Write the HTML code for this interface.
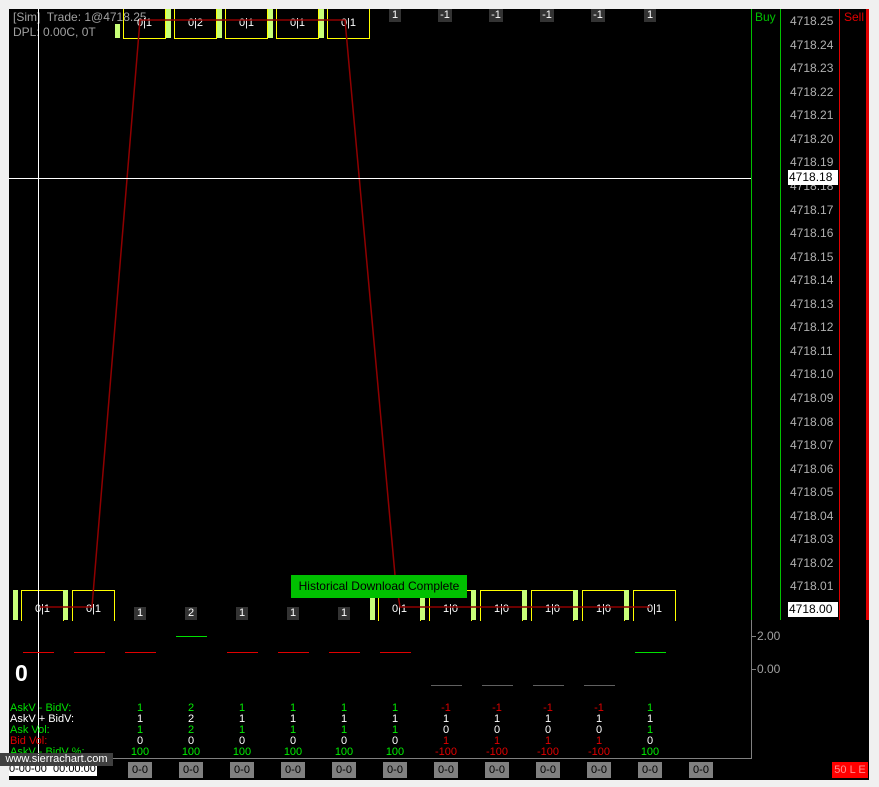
<!DOCTYPE html><html><head><style>
body{margin:0;width:879px;height:787px;background:#f0f0f0;position:relative;overflow:hidden;font-family:"Liberation Sans",sans-serif}
div{position:absolute}
.bk{left:9px;top:9px;width:860px;height:771px;background:#000}
.bx{border:1px solid #ffff00;border-top:none;width:41px;height:29px;color:#fff;font-size:11px;text-align:center;line-height:28px}
.bb{border:1px solid #ffff00;border-bottom:none;width:41px;height:30px;color:#fff;font-size:11px;text-align:center;line-height:36px}
.g{background:#c8ff78;width:5px}
.p{left:790px;font-size:12px;color:#b0b0b0;width:41px;white-space:nowrap}
.h{background:#fff;color:#000;left:788px;width:50px;height:15px;padding-left:1px;box-sizing:border-box}
.t{font-size:11px;color:#fff;background:#333;width:12px;text-align:center;height:13px;line-height:13px}
.d{height:1px;width:31px}
.r{font-size:11px;line-height:11px;width:30px;text-align:center}
.z{top:762px;width:24px;height:16px;background:#808080;color:#000;font-size:11px;line-height:16px;text-align:center}
</style></head><body>
<div class="bk"></div>
<div style="left:751px;top:9px;width:1px;height:611px;background:#00c000"></div>
<div style="left:780px;top:9px;width:1px;height:611px;background:#00c000"></div>
<div style="left:839px;top:9px;width:1px;height:611px;background:#e00000"></div>
<div style="left:866px;top:9px;width:3px;height:611px;background:#e00000"></div>
<div style="left:755px;top:10px;color:#00c000;font-size:12px">Buy</div>
<div style="left:844px;top:10px;color:#e00000;font-size:12px">Sell</div>
<div class="p" style="top:14px">4718.25</div><div class="p" style="top:38px">4718.24</div><div class="p" style="top:61px">4718.23</div><div class="p" style="top:85px">4718.22</div><div class="p" style="top:108px">4718.21</div><div class="p" style="top:132px">4718.20</div><div class="p" style="top:155px">4718.19</div><div class="p" style="top:179px">4718.18</div><div class="p" style="top:203px">4718.17</div><div class="p" style="top:226px">4718.16</div><div class="p" style="top:250px">4718.15</div><div class="p" style="top:273px">4718.14</div><div class="p" style="top:297px">4718.13</div><div class="p" style="top:320px">4718.12</div><div class="p" style="top:344px">4718.11</div><div class="p" style="top:367px">4718.10</div><div class="p" style="top:391px">4718.09</div><div class="p" style="top:415px">4718.08</div><div class="p" style="top:438px">4718.07</div><div class="p" style="top:462px">4718.06</div><div class="p" style="top:485px">4718.05</div><div class="p" style="top:509px">4718.04</div><div class="p" style="top:532px">4718.03</div><div class="p" style="top:556px">4718.02</div><div class="p" style="top:579px">4718.01</div>
<div class="p h" style="top:170px">4718.18</div>
<div class="p h" style="top:602px">4718.00</div>
<div style="left:13px;top:10px;color:#a0a0a0;font-size:12px;line-height:15px">[Sim]&nbsp; Trade: 1@4718.25<br>DPL: 0.00C, 0T</div>
<div class="g" style="left:115px;top:24px;height:14px"></div>
<div class="bx" style="left:123px;top:9px">0|1</div><div class="g" style="left:166px;top:9px;height:29px"></div>
<div class="bx" style="left:174px;top:9px">0|2</div><div class="g" style="left:217px;top:9px;height:29px"></div>
<div class="bx" style="left:225px;top:9px">0|1</div><div class="g" style="left:268px;top:9px;height:29px"></div>
<div class="bx" style="left:276px;top:9px">0|1</div><div class="g" style="left:319px;top:9px;height:29px"></div>
<div class="bx" style="left:327px;top:9px">0|1</div>
<div class="t" style="left:389px;top:9px">1</div><div class="t" style="left:438px;top:9px;width:14px">-1</div><div class="t" style="left:489px;top:9px;width:14px">-1</div><div class="t" style="left:540px;top:9px;width:14px">-1</div><div class="t" style="left:591px;top:9px;width:14px">-1</div><div class="t" style="left:644px;top:9px">1</div>
<div class="g" style="left:13px;top:590px;height:30px"></div><div class="bb" style="left:21px;top:590px">0|1</div>
<div class="g" style="left:63px;top:590px;height:30px"></div><div class="bb" style="left:72px;top:590px">0|1</div>
<div class="g" style="left:370px;top:590px;height:30px"></div><div class="bb" style="left:378px;top:590px">0|1</div>
<div class="g" style="left:420px;top:590px;height:30px"></div><div class="bb" style="left:429px;top:590px">1|0</div>
<div class="g" style="left:471px;top:590px;height:30px"></div><div class="bb" style="left:480px;top:590px">1|0</div>
<div class="g" style="left:522px;top:590px;height:30px"></div><div class="bb" style="left:531px;top:590px">1|0</div>
<div class="g" style="left:573px;top:590px;height:30px"></div><div class="bb" style="left:582px;top:590px">1|0</div>
<div class="g" style="left:624px;top:590px;height:30px"></div><div class="bb" style="left:633px;top:590px">0|1</div>
<div class="t" style="left:134px;top:607px">1</div><div class="t" style="left:185px;top:607px">2</div><div class="t" style="left:236px;top:607px">1</div><div class="t" style="left:287px;top:607px">1</div><div class="t" style="left:338px;top:607px">1</div>
<svg style="position:absolute;left:0;top:0" width="879" height="787"><polyline points="40,607 92,607 140,20 345,20 395,575 400,607 650,607" fill="none" stroke="#900000" stroke-width="1.5"/>
<line x1="38.5" y1="9" x2="38.5" y2="760" stroke="#fff"/><line x1="9" y1="178.5" x2="751" y2="178.5" stroke="#fff"/>
<line x1="751.5" y1="620" x2="751.5" y2="758" stroke="#808080"/><line x1="9" y1="758.5" x2="752" y2="758.5" stroke="#808080"/>
<line x1="751" y1="636.5" x2="756" y2="636.5" stroke="#808080"/><line x1="751" y1="669.5" x2="756" y2="669.5" stroke="#808080"/></svg>
<div style="left:291px;top:575px;width:176px;height:23px;background:#00c000;color:#000;font-size:12px;line-height:23px;text-align:center">Historical Download Complete</div>
<div style="left:757px;top:629px;color:#a0a0a0;font-size:12px">2.00</div><div style="left:757px;top:662px;color:#a0a0a0;font-size:12px">0.00</div>
<div class="d" style="left:23px;top:652px;background:#e00000"></div><div class="d" style="left:74px;top:652px;background:#e00000"></div><div class="d" style="left:125px;top:652px;background:#e00000"></div><div class="d" style="left:176px;top:636px;background:#00e000"></div><div class="d" style="left:227px;top:652px;background:#e00000"></div><div class="d" style="left:278px;top:652px;background:#e00000"></div><div class="d" style="left:329px;top:652px;background:#e00000"></div><div class="d" style="left:380px;top:652px;background:#e00000"></div>
<div class="d" style="left:431px;top:685px;background:#606060"></div><div class="d" style="left:482px;top:685px;background:#606060"></div><div class="d" style="left:533px;top:685px;background:#606060"></div><div class="d" style="left:584px;top:685px;background:#606060"></div><div class="d" style="left:635px;top:652px;background:#00e000"></div>
<div style="left:15px;top:660px;color:#fff;font-size:23px;font-weight:bold">0</div>
<div style="left:10px;top:703px;font-size:11px;line-height:11px"><span style="color:#00e000">AskV - BidV:</span><br><span style="color:#fff">AskV + BidV:</span><br><span style="color:#00e000">Ask Vol:</span><br><span style="color:#e00000">Bid Vol:</span><br><span style="color:#00e000">AskV - BidV %:</span></div>
<div class="r" style="left:125px;top:703px"><span style="color:#0e0">1</span><br><span style="color:#fff">1</span><br><span style="color:#0e0">1</span><br><span style="color:#fff">0</span><br><span style="color:#0e0">100</span></div>
<div class="r" style="left:176px;top:703px"><span style="color:#0e0">2</span><br><span style="color:#fff">2</span><br><span style="color:#0e0">2</span><br><span style="color:#fff">0</span><br><span style="color:#0e0">100</span></div>
<div class="r" style="left:227px;top:703px"><span style="color:#0e0">1</span><br><span style="color:#fff">1</span><br><span style="color:#0e0">1</span><br><span style="color:#fff">0</span><br><span style="color:#0e0">100</span></div>
<div class="r" style="left:278px;top:703px"><span style="color:#0e0">1</span><br><span style="color:#fff">1</span><br><span style="color:#0e0">1</span><br><span style="color:#fff">0</span><br><span style="color:#0e0">100</span></div>
<div class="r" style="left:329px;top:703px"><span style="color:#0e0">1</span><br><span style="color:#fff">1</span><br><span style="color:#0e0">1</span><br><span style="color:#fff">0</span><br><span style="color:#0e0">100</span></div>
<div class="r" style="left:380px;top:703px"><span style="color:#0e0">1</span><br><span style="color:#fff">1</span><br><span style="color:#0e0">1</span><br><span style="color:#fff">0</span><br><span style="color:#0e0">100</span></div>
<div class="r" style="left:431px;top:703px"><span style="color:#e00000">-1</span><br><span style="color:#fff">1</span><br><span style="color:#fff">0</span><br><span style="color:#e00000">1</span><br><span style="color:#e00000">-100</span></div>
<div class="r" style="left:482px;top:703px"><span style="color:#e00000">-1</span><br><span style="color:#fff">1</span><br><span style="color:#fff">0</span><br><span style="color:#e00000">1</span><br><span style="color:#e00000">-100</span></div>
<div class="r" style="left:533px;top:703px"><span style="color:#e00000">-1</span><br><span style="color:#fff">1</span><br><span style="color:#fff">0</span><br><span style="color:#e00000">1</span><br><span style="color:#e00000">-100</span></div>
<div class="r" style="left:584px;top:703px"><span style="color:#e00000">-1</span><br><span style="color:#fff">1</span><br><span style="color:#fff">0</span><br><span style="color:#e00000">1</span><br><span style="color:#e00000">-100</span></div>
<div class="r" style="left:635px;top:703px"><span style="color:#0e0">1</span><br><span style="color:#fff">1</span><br><span style="color:#0e0">1</span><br><span style="color:#fff">0</span><br><span style="color:#0e0">100</span></div>
<div class="z" style="left:128px">0-0</div><div class="z" style="left:179px">0-0</div><div class="z" style="left:230px">0-0</div><div class="z" style="left:281px">0-0</div><div class="z" style="left:332px">0-0</div><div class="z" style="left:383px">0-0</div><div class="z" style="left:434px">0-0</div><div class="z" style="left:485px">0-0</div><div class="z" style="left:536px">0-0</div><div class="z" style="left:587px">0-0</div><div class="z" style="left:638px">0-0</div><div class="z" style="left:689px">0-0</div>
<div style="left:832px;top:762px;width:36px;height:16px;background:#ff0000;color:#ff9090;font-size:11px;line-height:16px;text-align:center">50 L E</div>
<div style="left:9px;top:763px;width:88px;height:13px;background:#fff;color:#000;font-size:11px;line-height:13px">0-00-00&nbsp; 00:00:00</div>
<div style="left:0;top:753px;width:113px;height:13px;background:#404040;color:#fff;font-size:11px;line-height:13px;text-align:center">www.sierrachart.com</div>
</body></html>
